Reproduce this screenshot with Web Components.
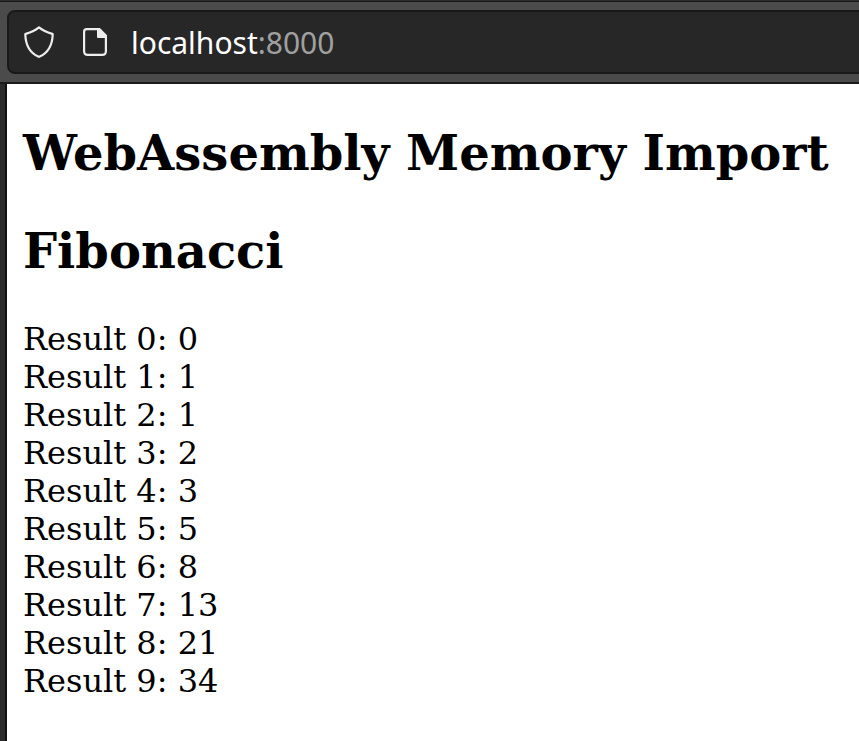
<!DOCTYPE html>
<html lang="en">
<head>
<meta charset="utf-8">
<title>WebAssembly Memory Import</title>
<style>
html, body { margin: 0; height: 100%; overflow: hidden; background: #fff; }
</style>
</head>
<body>
<browser-window>
  <url-bar slot="toolbar" host="localhost" port=":8000"></url-bar>
  <page-heading>WebAssembly Memory Import</page-heading>
  <page-heading>Fibonacci</page-heading>
  <fibonacci-results count="10"></fibonacci-results>
</browser-window>
<script>
class BrowserWindow extends HTMLElement {
  constructor() {
    super();
    this.attachShadow({ mode: 'open' }).innerHTML = `
      <style>
        :host { display: flex; flex-direction: column; height: 100vh; box-sizing: border-box; }
        header { box-sizing: border-box; height: 84px; flex: none; background: #4b4b4b;
          border-top: 1px solid #2b2b2b; border-bottom: 2px solid #1a1a1a;
          box-shadow: inset 0 1px #1a1a1a; padding: 9px 0 0 7px; overflow: hidden; }
        .view { flex: 1; display: flex; min-height: 0; background: #fff; }
        .edge { width: 5px; flex: none; background: #2b2b2b; border-right: 2px solid #111; }
        main { flex: 1; padding: 40px 0 0 16px; color: #000; }
      </style>
      <header><slot name="toolbar"></slot></header>
      <div class="view"><div class="edge"></div><main><slot></slot></main></div>`;
  }
}
class UrlBar extends HTMLElement {
  connectedCallback() {
    this.attachShadow({ mode: 'open' }).innerHTML = `
      <style>
        :host { display: flex; align-items: center; box-sizing: border-box; height: 64px;
          margin-right: -20px; padding-left: 14px; background: #272727;
          border: 2px solid #191919; border-radius: 8px;
          font: 30px/40px "Noto Sans", sans-serif; color: #fff; white-space: nowrap; }
        svg { width: 32px; height: 32px; flex: none; fill: none; stroke: #ededed; stroke-width: 2.2; stroke-linejoin: round; }
        .file { margin: 0 20px 0 24px; }
        span { padding-top: 2px; }
        .port { color: #a0a0a0; }
      </style>
      <svg viewBox="0 0 32 32"><path d="M16 1.3 C12.4 4.2 8 6.2 2.8 7.9 Q2.2 8.1 2.3 8.7 C2.7 19 6.5 26.5 15.3 30.6 Q16 31 16.7 30.6 C25.5 26.5 29.3 19 29.7 8.7 Q29.8 8.1 29.2 7.9 C24 6.2 19.6 4.2 16 1.3Z"/></svg>
      <svg class="file" viewBox="0 0 32 32"><path d="M7.7 3.1H20L26.9 10V25.3Q26.9 28.9 23.3 28.9H8.7Q5.1 28.9 5.1 25.3V5.7Q5.1 3.1 7.7 3.1Z"/><path d="M18 2H20.8L28 9.2V12H19Q18 12 18 11Z" fill="#ededed" stroke="none"/></svg>
      <span>${this.getAttribute('host')}<span class="port">${this.getAttribute('port')}</span></span>`;
  }
}
class PageHeading extends HTMLElement {
  constructor() {
    super();
    this.attachShadow({ mode: 'open' }).innerHTML = `
      <style>
        :host { display: block; margin-bottom: 40px; }
        h2 { margin: 0; font: bold 48px/58px "DejaVu Serif", serif; white-space: nowrap; }
      </style>
      <h2><slot></slot></h2>`;
  }
}
class FibonacciResults extends HTMLElement {
  connectedCallback() {
    const rows = [];
    let a = 0, b = 1;
    for (let i = 0; i < Number(this.getAttribute('count')); i++) {
      rows.push(`<div>Result ${i}: ${a}</div>`);
      [a, b] = [b, a + b];
    }
    this.attachShadow({ mode: 'open' }).innerHTML = `
      <style>:host { display: block; font: 32px/38px "DejaVu Serif", serif; }</style>
      ${rows.join('')}`;
  }
}
customElements.define('browser-window', BrowserWindow);
customElements.define('url-bar', UrlBar);
customElements.define('page-heading', PageHeading);
customElements.define('fibonacci-results', FibonacciResults);
</script>
</body>
</html>
